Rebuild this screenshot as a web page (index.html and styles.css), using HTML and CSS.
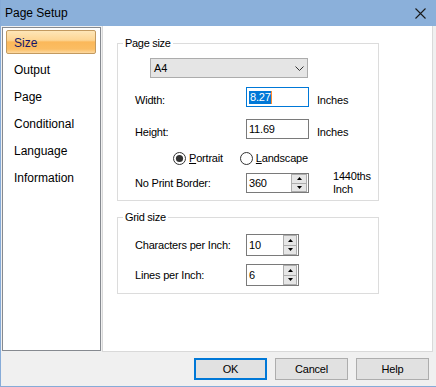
FILE: index.html
```html
<!DOCTYPE html>
<html>
<head>
<meta charset="utf-8">
<title>Page Setup</title>
<link rel="stylesheet" href="styles.css">
</head>
<body>
<div class="window">
  <div class="titlebar">
    <span class="title">Page Setup</span>
    <svg class="close" width="11" height="11" viewBox="0 0 11 11"><path d="M0.5 0.5L10.5 10.5M10.5 0.5L0.5 10.5" stroke="#1a1a1a" stroke-width="1.1" fill="none"/></svg>
  </div>
  <div class="main">
    <ul class="nav">
      <li class="nav-item active">Size</li>
      <li class="nav-item">Output</li>
      <li class="nav-item">Page</li>
      <li class="nav-item">Conditional</li>
      <li class="nav-item">Language</li>
      <li class="nav-item">Information</li>
    </ul>
    <div class="panel">
      <fieldset class="group group-page">
        <legend>Page size</legend>
        <div class="group-body">
          <div class="select"><span>A4</span><svg width="9" height="5" viewBox="0 0 9 5"><path d="M0.5 0.5L4.5 4.5L8.5 0.5" stroke="#333" fill="none"/></svg></div>
          <div class="row row-text row-width">
            <span class="lbl">Width:</span>
            <div class="input focus"><span class="sel">8.27</span></div>
            <span class="unit">Inches</span>
          </div>
          <div class="row row-text row-height">
            <span class="lbl">Height:</span>
            <div class="input"><span>11.69</span></div>
            <span class="unit">Inches</span>
          </div>
          <div class="row radios">
            <span class="radio radio-first">
              <svg width="13" height="13" viewBox="0 0 13 13"><circle cx="6.5" cy="6.5" r="6" fill="#fff" stroke="#333"/><circle cx="6.5" cy="6.5" r="3.6" fill="#333"/></svg>
              <span class="radio-text"><u>P</u>ortrait</span>
            </span>
            <span class="radio radio-second">
              <svg width="13" height="13" viewBox="0 0 13 13"><circle cx="6.5" cy="6.5" r="6" fill="#fff" stroke="#333"/></svg>
              <span class="radio-text"><u>L</u>andscape</span>
            </span>
          </div>
          <div class="row row-border">
            <span class="lbl">No Print Border:</span>
            <div class="spin spin-wide">
              <span class="spin-value">360</span>
              <div class="spin-btns">
                <span class="spin-btn"><svg width="5" height="3" viewBox="0 0 5 3"><path d="M2.5 0L5 3H0Z" fill="#000"/></svg></span>
                <span class="spin-btn"><svg width="5" height="3" viewBox="0 0 5 3"><path d="M0 0H5L2.5 3Z" fill="#000"/></svg></span>
              </div>
            </div>
            <span class="unit-2">1440ths<br>Inch</span>
          </div>
        </div>
      </fieldset>
      <fieldset class="group group-grid">
        <legend>Grid size</legend>
        <div class="group-body">
          <div class="row row-chars">
            <span class="lbl">Characters per Inch:</span>
            <div class="spin spin-narrow">
              <span class="spin-value">10</span>
              <div class="spin-btns">
                <span class="spin-btn"><svg width="5" height="3" viewBox="0 0 5 3"><path d="M2.5 0L5 3H0Z" fill="#000"/></svg></span>
                <span class="spin-btn"><svg width="5" height="3" viewBox="0 0 5 3"><path d="M0 0H5L2.5 3Z" fill="#000"/></svg></span>
              </div>
            </div>
          </div>
          <div class="row row-lines">
            <span class="lbl">Lines per Inch:</span>
            <div class="spin spin-narrow">
              <span class="spin-value">6</span>
              <div class="spin-btns">
                <span class="spin-btn"><svg width="5" height="3" viewBox="0 0 5 3"><path d="M2.5 0L5 3H0Z" fill="#000"/></svg></span>
                <span class="spin-btn"><svg width="5" height="3" viewBox="0 0 5 3"><path d="M0 0H5L2.5 3Z" fill="#000"/></svg></span>
              </div>
            </div>
          </div>
        </div>
      </fieldset>
    </div>
  </div>
  <div class="buttons">
    <button class="btn btn-default">OK</button>
    <button class="btn">Cancel</button>
    <button class="btn">Help</button>
  </div>
</div>
</body>
</html>
```

FILE: styles.css
```css
* { box-sizing: border-box; }
html, body { margin: 0; padding: 0; }
body {
  width: 436px;
  height: 387px;
  overflow: hidden;
  background: #f0f0f0;
  font-family: "Liberation Sans", Arial, sans-serif;
  color: #000;
}
.window {
  width: 436px;
  height: 387px;
  background: #f0f0f0;
  border-left: 1px solid #86abd8;
  border-bottom: 1px solid #86abd8;
  display: flex;
  flex-direction: column;
}
.titlebar {
  height: 26px;
  flex: none;
  background: #8bb0da;
  display: flex;
  align-items: center;
  justify-content: space-between;
  padding: 0 10px 0 4px;
}
.title {
  font-size: 12px;
  line-height: 13px;
  color: #000;
}
.close { display: block; }
.main {
  display: flex;
  align-items: flex-start;
  padding-left: 1px;
}
.nav {
  list-style: none;
  margin: 1px 0 0 0;
  padding: 2px 4px 0 3px;
  width: 99px;
  height: 324px;
  background: #fff;
  border: 1px solid #868a90;
}
.nav-item {
  height: 24px;
  line-height: 24px;
  margin-bottom: 3px;
  padding-left: 7px;
  font-size: 12px;
  border: 1px solid transparent;
  border-radius: 2px;
}
.nav-item.active {
  color: #14166a;
  border-color: #c39a5f;
  background: linear-gradient(to bottom, #fee6b8 0%, #fdd593 42%, #fbb85a 50%, #fbbd63 82%, #fdd9a0 100%);
}
.panel {
  margin-left: 1px;
  width: 331px;
  height: 326px;
  background: #fff;
  border: 1px solid #d9d9d9;
  border-top: none;
  padding-left: 14px;
  padding-top: 11px;
}
.group {
  margin: 0;
  width: 262px;
  border: 1px solid #dcdcdc;
  padding: 8px 0 7px 5px;
  min-width: 0;
}
.group legend {
  padding: 0 2px;
  font-size: 11px;
  line-height: 13px;
  letter-spacing: -0.3px;
}
.group-grid {
  margin-top: 10px;
  padding-top: 10px;
}
.group-body {
  padding-left: 12px;
  font-size: 11px;
  letter-spacing: -0.2px;
}
.select {
  margin-left: 15px;
  width: 158px;
  height: 20px;
  background: #e5e5e5;
  border: 1px solid #acacac;
  display: flex;
  align-items: center;
  justify-content: space-between;
  padding: 0 3px 0 3px;
  font-size: 11px;
}
.select svg { display: block; }
.row {
  display: flex;
  align-items: center;
}
.lbl {
  width: 111px;
  flex: none;
  line-height: 13px;
}
.row-width { margin-top: 9px; height: 20px; }
.row-height { margin-top: 12px; height: 20px; }
.row-text .lbl, .row-text .unit { margin-top: 7px; }
.radios { margin-top: 12px; height: 14px; }
.row-border { margin-top: 8px; height: 20px; }
.row-lines { margin-top: 8px; }
.input {
  width: 63px;
  height: 20px;
  flex: none;
  border: 1px solid #7a7a7a;
  background: #fff;
  padding-left: 2px;
  display: flex;
  align-items: center;
  line-height: 13px;
}
.input.focus { border-color: #0078d7; }
.sel {
  background: #0078d7;
  color: #fff;
  padding-left: 1px;
  border-right: 1px solid #ff8a2c;
}
.unit {
  margin-left: 8px;
  line-height: 13px;
}
.radio {
  display: flex;
  align-items: center;
  line-height: 13px;
}
.radio svg { display: block; flex: none; }
.radio-text { margin-left: 3px; }
.radio-first { margin-left: 38px; }
.radio-second { margin-left: 17px; }
.spin {
  flex: none;
  border: 1px solid #7a7a7a;
  background: #fff;
  display: flex;
  align-items: stretch;
}
.spin-wide { width: 63px; height: 20px; }
.spin-narrow { width: 53px; height: 22px; }
.spin-value {
  flex: 1;
  padding-left: 2px;
  display: flex;
  align-items: center;
  line-height: 13px;
}
.spin-btns {
  display: flex;
  flex-direction: column;
  margin-right: 1px;
}
.spin-wide .spin-btns { width: 16px; }
.spin-narrow .spin-btns { width: 14px; }
.spin-btn {
  flex: 1;
  display: flex;
  align-items: center;
  justify-content: center;
  background: #e6e6e6;
  border: 1px solid #adadad;
}
.spin-btn + .spin-btn { border-top: none; }
.spin-btn svg { display: block; }
.unit-2 {
  margin-left: 24px;
  line-height: 13px;
}
.buttons {
  display: flex;
  justify-content: flex-end;
  gap: 8px;
  padding-right: 7px;
  margin-top: 6px;
}
.btn {
  width: 73px;
  height: 22px;
  margin: 0;
  padding: 0;
  background: #e1e1e1;
  border: 1px solid #adadad;
  font-family: "Liberation Sans", Arial, sans-serif;
  font-size: 11px;
  letter-spacing: -0.2px;
  color: #000;
}
.btn-default {
  border-color: #0078d7;
  box-shadow: inset 0 0 0 1px #0078d7;
}
```
